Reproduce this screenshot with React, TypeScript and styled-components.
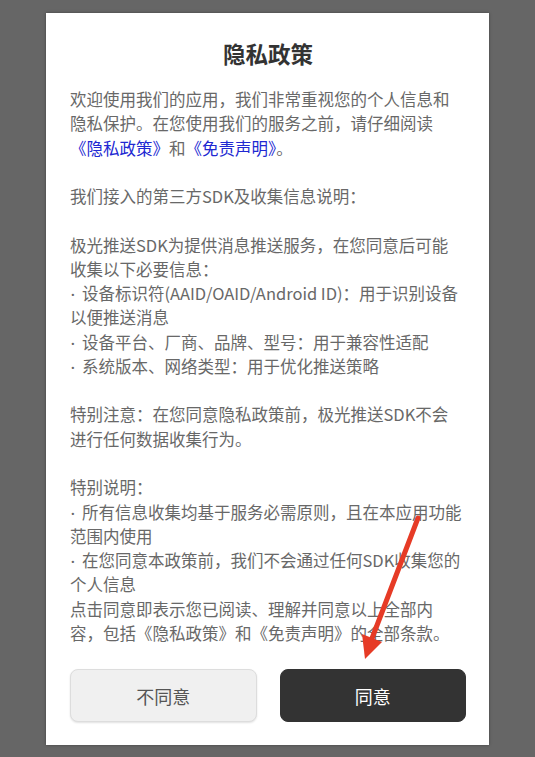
import React from "react";
import styled, { createGlobalStyle } from "styled-components";

const GlobalStyle = createGlobalStyle`
  html, body {
    margin: 0;
    padding: 0;
    background: #666666;
  }
  body {
    font-family: "Noto Sans CJK SC", "Noto Sans", sans-serif;
  }
`;

const LINE = 24.27;

const Page = styled.div`
  position: relative;
  width: 535px;
  height: 757px;
  background: #666666;
  padding-top: 13px;
  box-sizing: border-box;
  overflow: hidden;
`;

const Dialog = styled.div`
  margin-left: 46px;
  width: 443px;
  height: 732px;
  box-sizing: border-box;
  background: #ffffff;
  box-shadow: 0 0 3px rgba(0, 0, 0, 0.35);
  padding: 24px 23px 23px 24px;
  display: flex;
  flex-direction: column;
`;

const Title = styled.h1`
  margin: 0 0 18px;
  height: 32px;
  line-height: 32px;
  font-size: 22.5px;
  font-weight: 700;
  color: #333333;
  text-align: center;
`;

const Body = styled.div`
  font-size: 16.5px;
  line-height: ${LINE}px;
  color: #686868;
  white-space: nowrap;
`;

const Line = styled.div`
  height: ${LINE}px;
`;

const Bullet = styled.span`
  font-family: Roboto, "Liberation Sans", sans-serif;
  font-size: 11px;
  display: inline-block;
  width: 11px;
  padding-left: 1px;
  vertical-align: 1px;
`;

const Link = styled.span`
  color: #2128d2;
`;

const Actions = styled.div`
  margin-top: 24px;
  display: grid;
  grid-template-columns: 1fr 1fr;
  gap: 23px;
`;

const Button = styled.button<{ $primary?: boolean }>`
  height: 53px;
  border-radius: 8px;
  font-family: inherit;
  font-size: 18px;
  cursor: pointer;
  border: 1px solid ${({ $primary }) => ($primary ? "#333333" : "#dddddd")};
  background: ${({ $primary }) => ($primary ? "#333333" : "#f0f0f0")};
  color: ${({ $primary }) => ($primary ? "#ffffff" : "#555555")};
  box-shadow: ${({ $primary }) => ($primary ? "none" : "0 1px 2px rgba(0,0,0,0.12)")};
`;

const Annotation = styled.svg`
  position: absolute;
  left: 0;
  top: 0;
  pointer-events: none;
`;

const item = (text: string) => (
  <>
    <Bullet>•</Bullet>
    {text}
  </>
);

const lines: React.ReactNode[] = [
  "欢迎使用我们的应用，我们非常重视您的个人信息和",
  "隐私保护。在您使用我们的服务之前，请仔细阅读",
  <>
    <Link>《隐私政策》</Link>和<Link>《免责声明》</Link>。
  </>,
  "",
  "我们接入的第三方SDK及收集信息说明：",
  "",
  "极光推送SDK为提供消息推送服务，在您同意后可能",
  "收集以下必要信息：",
  item("设备标识符(AAID/OAID/Android ID)：用于识别设备"),
  "以便推送消息",
  item("设备平台、厂商、品牌、型号：用于兼容性适配"),
  item("系统版本、网络类型：用于优化推送策略"),
  "",
  "特别注意：在您同意隐私政策前，极光推送SDK不会",
  "进行任何数据收集行为。",
  "",
  "特别说明：",
  item("所有信息收集均基于服务必需原则，且在本应用功能"),
  "范围内使用",
  item("在您同意本政策前，我们不会通过任何SDK收集您的"),
  "个人信息",
  "点击同意即表示您已阅读、理解并同意以上全部内",
  "容，包括《隐私政策》和《免责声明》的全部条款。",
];

export default function App() {
  return (
    <>
      <GlobalStyle />
      <Page>
        <Dialog>
          <Title>隐私政策</Title>
          <Body>
            {lines.map((l, i) => (
              <Line key={i}>{l}</Line>
            ))}
          </Body>
          <Actions>
            <Button>不同意</Button>
            <Button $primary>同意</Button>
          </Actions>
        </Dialog>
        <Annotation width="535" height="757" viewBox="0 0 535 757">
          <line x1="418" y1="518" x2="371" y2="641" stroke="#e63b26" strokeWidth="5" strokeLinecap="round" />
          <polygon points="365,659 382,642 362,634" fill="#e63b26" />
        </Annotation>
      </Page>
    </>
  );
}
